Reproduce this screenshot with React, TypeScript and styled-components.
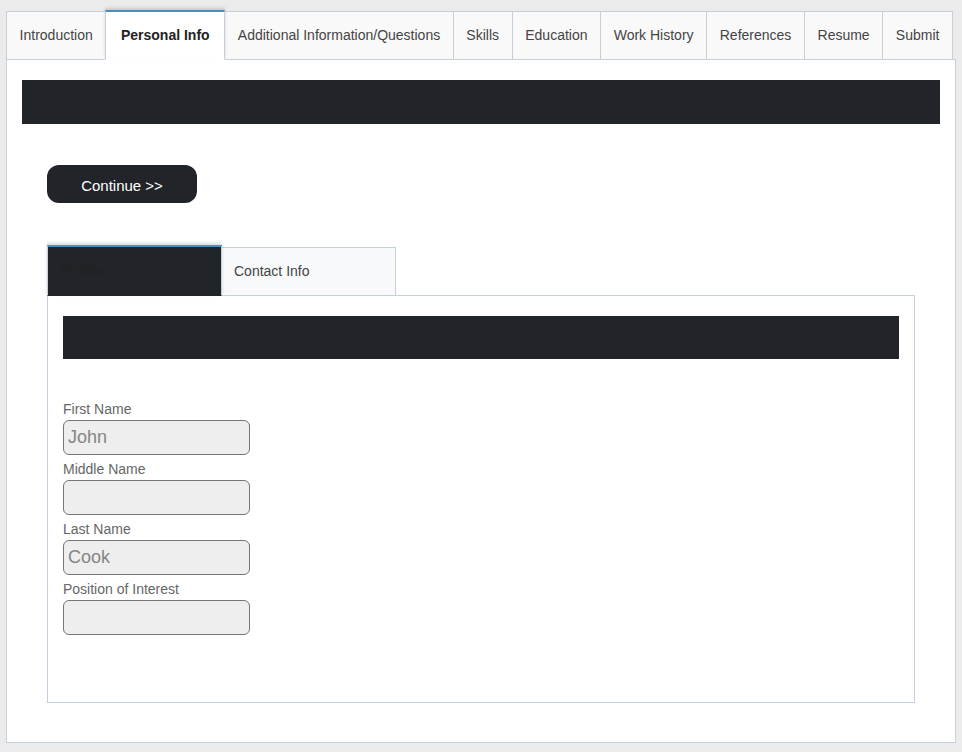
import React, { useState } from "react";
import styled, { createGlobalStyle, css } from "styled-components";

const GlobalStyle = createGlobalStyle`
  *, *::before, *::after { box-sizing: border-box; }
  body {
    margin: 0;
    background: #ebebeb;
    color: #393939;
    font-family: "Liberation Sans", Arial, sans-serif;
    font-size: 14px;
    line-height: 20px;
  }
`;

const line = "#c5d0dc";
const ink = "#212529";

const Page = styled.main`
  padding: 11px 6px 9px;
`;

const TabList = styled.div`
  display: flex;
  margin-bottom: -1px;
  padding-right: 3px;
`;

const Tab = styled.button<{ $active: boolean }>`
  flex: 1 0 auto;
  height: 49px;
  padding: 0 12px 2px;
  border: 1px solid ${line};
  background: #f9f9f9;
  color: #444;
  font: inherit;
  white-space: nowrap;
  cursor: pointer;

  & + & {
    margin-left: -1px;
  }

  ${({ $active }) =>
    $active &&
    css`
      z-index: 1;
      height: 50px;
      margin-top: -1px;
      padding: 0 14px 2px;
      border-top: 2px solid #4c8fbd;
      border-bottom-color: #fff;
      background: #fff;
      color: #222;
      font-weight: bold;
      box-shadow: 0 -2px 3px rgba(0, 0, 0, 0.15);
    `}
`;

const SubTab = styled(Tab)`
  flex: none;
  width: 175px;
  padding: 0 12px 2px;
  background: #f7f9fb;
  text-align: left;

  ${({ $active }) =>
    $active &&
    css`
      height: 51px;
      margin-top: -2px;
      border-bottom-color: ${ink};
      background: ${ink};
    `}
`;

const Panel = styled.section`
  padding: 20px 15px 39px;
  border: 1px solid ${line};
  background: #fff;
`;

const ProfilePanel = styled(Panel)`
  padding-bottom: 67px;
`;

const Content = styled.div`
  padding: 41px 25px 0;
`;

const Banner = styled.div`
  height: 44px;
  background: ${ink};
`;

const SubBanner = styled(Banner)`
  height: 43px;
`;

const ContinueButton = styled.button`
  display: block;
  width: 150px;
  height: 38px;
  margin-bottom: 44px;
  padding: 4px 0 0;
  border: 0;
  border-radius: 12px;
  background: ${ink};
  color: #fff;
  font: inherit;
  font-size: 15px;
  cursor: pointer;
`;

const Fields = styled.form`
  display: grid;
  justify-items: start;
  gap: 4px;
  padding-top: 40px;
`;

const FieldGroup = styled.div`
  display: grid;
  gap: 1px;
  width: 187px;
`;

const FieldLabel = styled.label`
  color: #666;
`;

const TextInput = styled.input`
  width: 100%;
  height: 35px;
  padding: 0 4px;
  border: 1px solid #767676;
  border-radius: 6px;
  background: #eee;
  color: #858585;
  font: inherit;
  font-size: 18px;
`;

const sections = [
  "Introduction",
  "Personal Info",
  "Additional Information/Questions",
  "Skills",
  "Education",
  "Work History",
  "References",
  "Resume",
  "Submit",
];

const subSections = ["Profile", "Contact Info"];

const fields = [
  { id: "first-name", label: "First Name", value: "John" },
  { id: "middle-name", label: "Middle Name", value: "" },
  { id: "last-name", label: "Last Name", value: "Cook" },
  { id: "position", label: "Position of Interest", value: "" },
];

export default function App() {
  const [section, setSection] = useState("Personal Info");
  const [subSection, setSubSection] = useState("Profile");

  return (
    <>
      <GlobalStyle />
      <Page>
        <TabList role="tablist" aria-label="Application">
          {sections.map((name) => (
            <Tab
              key={name}
              type="button"
              role="tab"
              aria-selected={name === section}
              $active={name === section}
              onClick={() => setSection(name)}
            >
              {name}
            </Tab>
          ))}
        </TabList>
        <Panel role="tabpanel" aria-label={section}>
          <Banner />
          <Content>
            <ContinueButton type="button">Continue &gt;&gt;</ContinueButton>
            <TabList role="tablist" aria-label="Personal Info">
              {subSections.map((name) => (
                <SubTab
                  key={name}
                  type="button"
                  role="tab"
                  aria-selected={name === subSection}
                  $active={name === subSection}
                  onClick={() => setSubSection(name)}
                >
                  {name}
                </SubTab>
              ))}
            </TabList>
            <ProfilePanel role="tabpanel" aria-label={subSection}>
              <SubBanner />
              <Fields>
                {fields.map(({ id, label, value }) => (
                  <FieldGroup key={id}>
                    <FieldLabel htmlFor={id}>{label}</FieldLabel>
                    <TextInput id={id} type="text" defaultValue={value} readOnly />
                  </FieldGroup>
                ))}
              </Fields>
            </ProfilePanel>
          </Content>
        </Panel>
      </Page>
    </>
  );
}
